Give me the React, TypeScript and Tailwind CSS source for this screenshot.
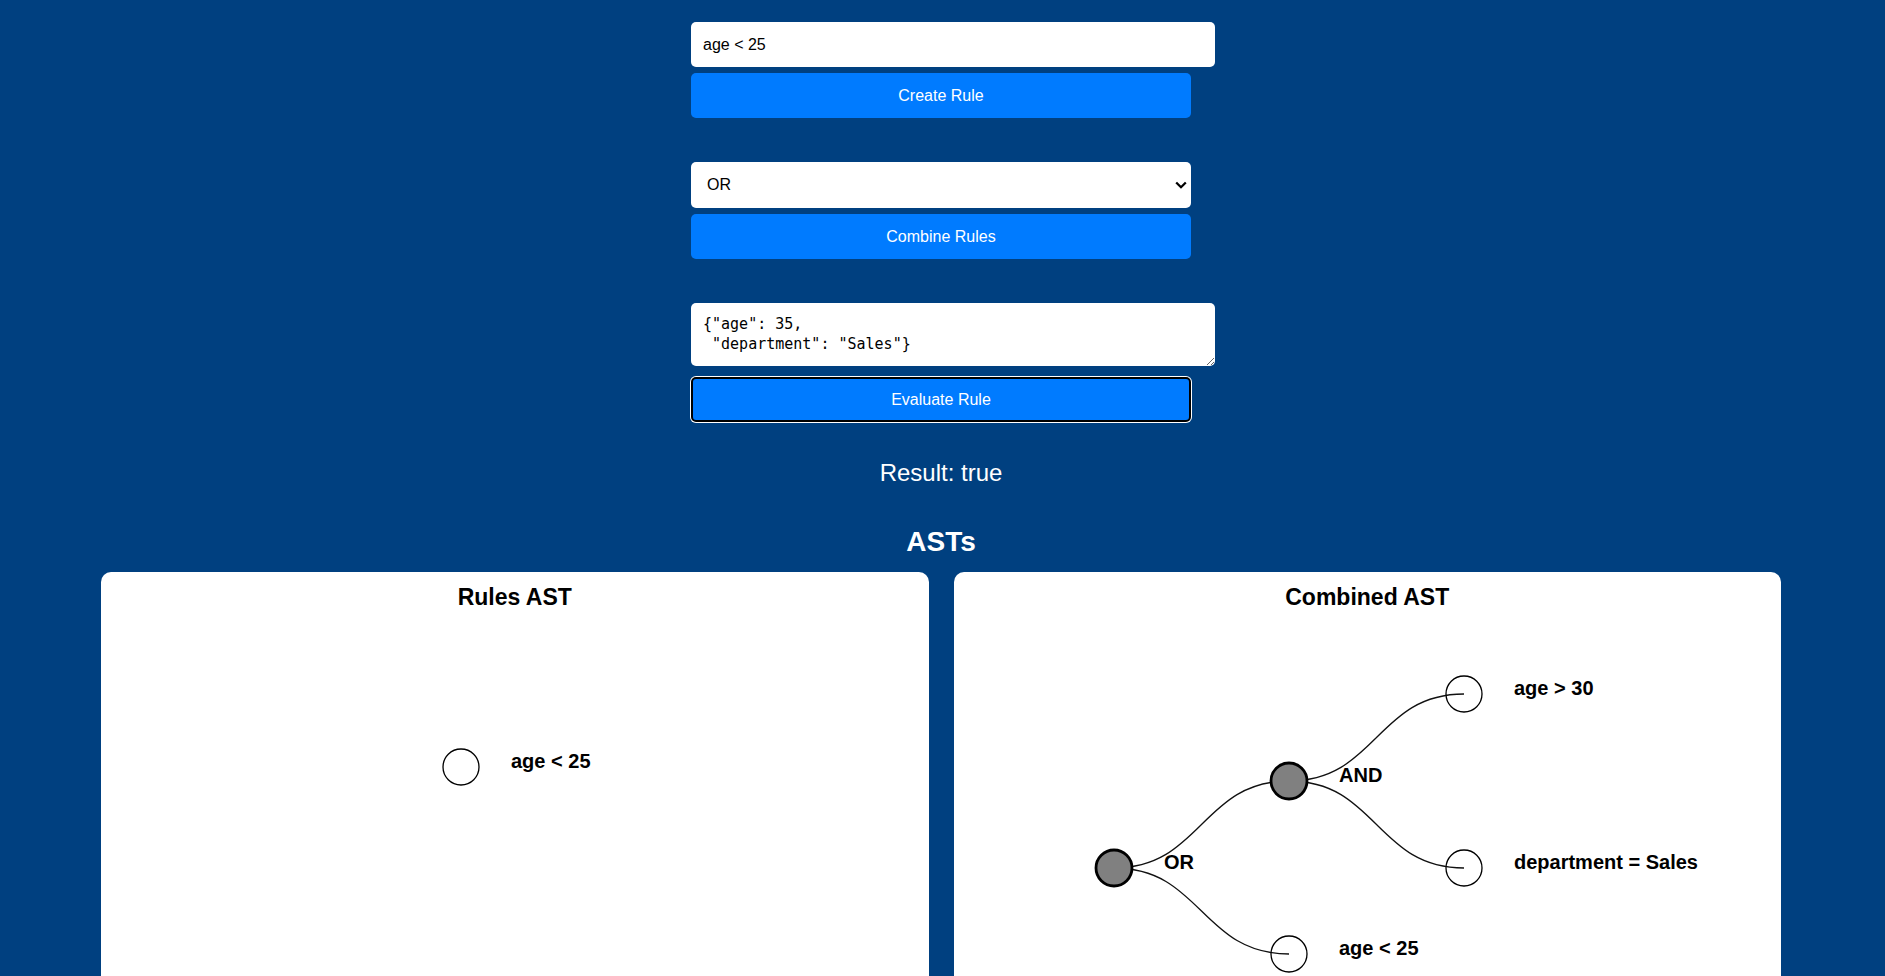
import { useState } from "react";

interface TreeNode {
  id: string;
  x: number;
  y: number;
  label: string;
  leaf: boolean;
}

interface TreeLink {
  from: string;
  to: string;
}

// positions as laid out by the tree (depth step 175, sibling step 173)
const combinedNodes: TreeNode[] = [
  { id: "or", x: 160, y: 246, label: "OR", leaf: false },
  { id: "and", x: 335, y: 159, label: "AND", leaf: false },
  { id: "a30", x: 510, y: 72, label: "age > 30", leaf: true },
  { id: "dept", x: 510, y: 246, label: "department = Sales", leaf: true },
  { id: "a25", x: 335, y: 332, label: "age < 25", leaf: true },
];

const combinedLinks: TreeLink[] = [
  { from: "or", to: "and" },
  { from: "or", to: "a25" },
  { from: "and", to: "a30" },
  { from: "and", to: "dept" },
];

const ruleNodes: TreeNode[] = [{ id: "r", x: 360, y: 145, label: "age < 25", leaf: true }];

function linkPath(a: TreeNode, b: TreeNode) {
  const mx = (a.x + b.x) / 2;
  return `M${a.x},${a.y}C${mx},${a.y} ${mx},${b.y} ${b.x},${b.y}`;
}

function AstTree({ nodes, links }: { nodes: TreeNode[]; links: TreeLink[] }) {
  const byId = Object.fromEntries(nodes.map((n) => [n.id, n]));
  return (
    <svg className="block w-full h-[450px]">
      {links.map((l) => (
        <path
          key={l.from + l.to}
          d={linkPath(byId[l.from], byId[l.to])}
          fill="none"
          stroke="#111"
          strokeWidth={1.3}
        />
      ))}
      {nodes.map((n) => (
        <g key={n.id} transform={`translate(${n.x},${n.y})`}>
          <circle
            r={18}
            fill={n.leaf ? "none" : "#808080"}
            stroke="#000"
            strokeWidth={n.leaf ? 1.3 : 2.8}
          />
          <text
            x={50}
            dy={1}
            fontSize={20}
            fontWeight={700}
            fontFamily="'Liberation Sans', Arial, sans-serif"
            fill="#000"
          >
            {n.label}
          </text>
        </g>
      ))}
    </svg>
  );
}

function Card({ title, children }: { title: string; children: React.ReactNode }) {
  return (
    <section className="flex-1 bg-white rounded-[10px] pt-[12px]">
      <h2 className="text-center text-[23px] leading-[26px] font-bold text-black mb-[12px]">
        {title}
      </h2>
      {children}
    </section>
  );
}

export default function App() {
  const [rule, setRule] = useState("age < 25");
  const [op, setOp] = useState("OR");
  const [data, setData] = useState('{"age": 35,\n "department": "Sales"}');

  return (
    <main
      className="h-screen overflow-hidden bg-[#004080] pr-[3px] pt-[22px]"
      style={{ fontFamily: "'Liberation Sans', Arial, sans-serif" }}
    >
      <div className="w-[500px] mx-auto flex flex-col items-start">
        {/* Create */}
        <input
          value={rule}
          onChange={(e) => setRule(e.target.value)}
          className="w-[524px] h-[45px] bg-white rounded-[5px] px-[12px] text-[16px] text-black outline-none"
        />
        <button className="mt-[6px] w-[500px] h-[45px] bg-[#007bff] rounded-[5px] text-white text-[16px]">
          Create Rule
        </button>

        {/* Combine */}
        <div className="relative mt-[44px] w-[500px]">
          <select
            value={op}
            onChange={(e) => setOp(e.target.value)}
            className="appearance-none w-[500px] h-[46px] bg-white rounded-[5px] pl-[16px] text-[16px] text-black outline-none"
          >
            <option>AND</option>
            <option>OR</option>
          </select>
          <svg
            className="absolute right-[4px] top-[19px] pointer-events-none"
            width="12"
            height="8"
            viewBox="0 0 12 8"
          >
            <polyline points="1.2,1.5 6,6.2 10.8,1.5" fill="none" stroke="#000" strokeWidth="2.3" />
          </svg>
        </div>
        <button className="mt-[6px] w-[500px] h-[45px] bg-[#007bff] rounded-[5px] text-white text-[16px]">
          Combine Rules
        </button>

        {/* Evaluate */}
        <textarea
          value={data}
          onChange={(e) => setData(e.target.value)}
          rows={2}
          className="block mt-[44px] w-[524px] h-[63px] bg-white rounded-[5px] px-[12px] py-[12px] text-[15px] leading-[19.5px] text-black outline-none"
          style={{ fontFamily: "'DejaVu Sans Mono', 'Liberation Mono', monospace" }}
        />
        <button className="mt-[11px] w-[500px] h-[45px] bg-[#007bff] rounded-[5px] border-2 border-black ring-1 ring-white text-white text-[16px]">
          Evaluate Rule
        </button>
      </div>

      <p className="mt-[37px] text-center text-white text-[24px] leading-[28px]">Result: true</p>

      <h1 className="mt-[39px] text-center text-white text-[28px] leading-[32px] font-bold">ASTs</h1>

      <div className="mt-[14px] w-[1680px] mx-auto flex gap-[25px]">
        <Card title="Rules AST">
          <AstTree nodes={ruleNodes} links={[]} />
        </Card>
        <Card title="Combined AST">
          <AstTree nodes={combinedNodes} links={combinedLinks} />
        </Card>
      </div>
    </main>
  );
}
